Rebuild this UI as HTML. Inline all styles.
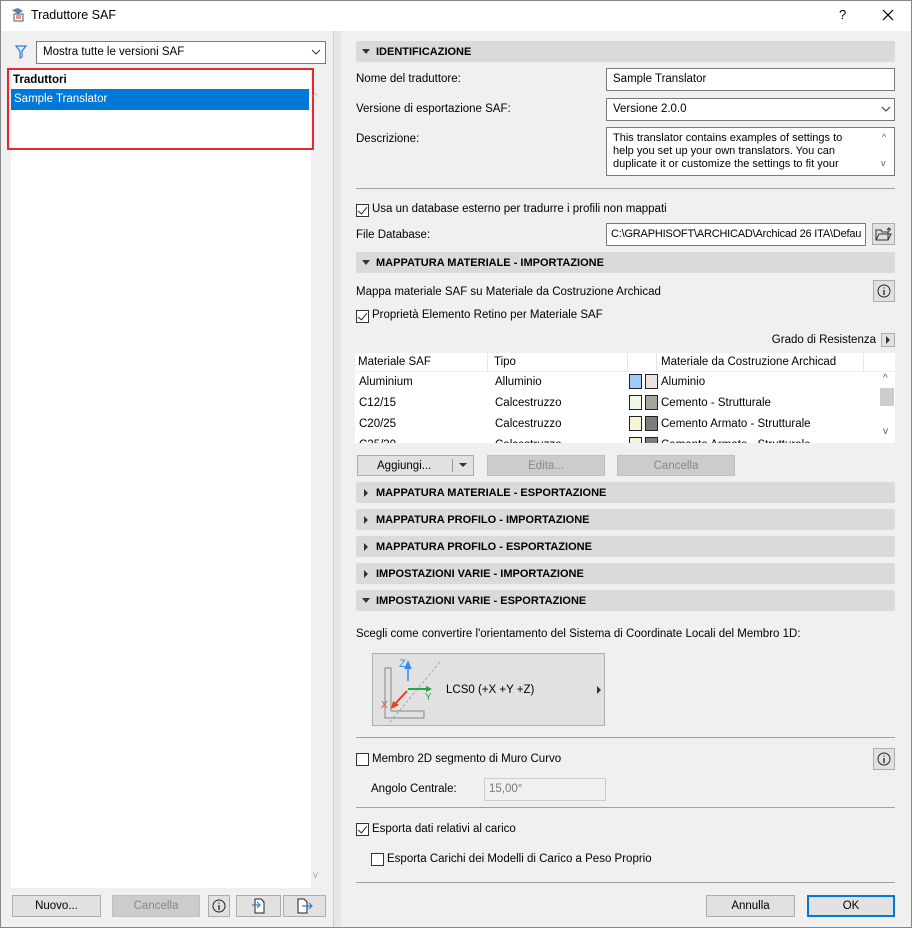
<!DOCTYPE html>
<html><head><meta charset="utf-8"><style>
*{box-sizing:border-box;margin:0;padding:0}
body{width:912px;height:928px;background:#f0f0f0;font-family:"Liberation Sans",sans-serif;font-size:11.5px;color:#000;position:relative;overflow:hidden}
.a{position:absolute}
.win{left:0;top:0;width:912px;height:928px;border:1px solid #888;}
.tb{left:1px;top:1px;width:910px;height:30px;background:#fff}
.hdr{position:absolute;left:356px;width:539px;height:21px;background:#dadada;border-radius:2px;font-weight:bold;font-size:11px;line-height:22px;padding-left:20px}
.hdr:before{content:"";position:absolute;left:8px;top:7px;border-left:4px solid #333;border-top:4px solid transparent;border-bottom:4px solid transparent}
.hdr.o:before{left:6px;top:8px;border-top:5px solid #333;border-left:4px solid transparent;border-right:4px solid transparent;border-bottom:0}
.inp{position:absolute;background:#fff;border:1px solid #7a7a7a;height:23px;line-height:21px;padding-left:6px}
.btn{position:absolute;background:#e1e1e1;border:1px solid #adadad;height:22px;line-height:20px;text-align:center}
.dis{background:#ccc;border-color:#bfbfbf;color:#888}
.cb{position:absolute;width:13px;height:13px;border:1px solid #333;background:#fff}
.sep{position:absolute;height:1px;background:#a0a0a0}
.t{position:absolute;white-space:nowrap}
.chk:after{content:"";position:absolute;left:3px;top:0px;width:4px;height:8px;border:solid #222;border-width:0 1.5px 1.5px 0;transform:rotate(40deg)}
.sw{position:absolute;width:13px;height:15px;border:1px solid #222}
</style></head><body>
<div class="a win"></div>
<div class="a tb"></div>
<svg class="a" style="left:9px;top:6px" width="18" height="18"><path d="M3 4 L9 2 L14 5 L9 8Z" fill="#5c7fb8"/><rect x="5" y="8" width="9" height="7" fill="#fff" stroke="#555"/><path d="M7 10h5M7 12h5" stroke="#c33"/></svg>
<div class="t" style="left:31px;top:8px;font-size:12.5px">Traduttore SAF</div>
<div class="t" style="left:839px;top:7px;font-size:13px">?</div>
<svg class="a" style="left:882px;top:9px" width="12" height="12"><path d="M1 1L11 11M11 1L1 11" stroke="#000" stroke-width="1.2"/></svg>

<!-- left -->
<svg class="a" style="left:15px;top:45px" width="12" height="14"><path d="M1 1H11L7 6V12L5 13V6Z" fill="none" stroke="#2a7fd4" stroke-width="1.2"/></svg>
<div class="inp" style="left:36px;top:41px;width:290px;height:23px">Mostra tutte le versioni SAF</div>
<svg class="a" style="left:311px;top:49px" width="10" height="6"><path d="M1 1L5 5L9 1" fill="none" stroke="#333"/></svg>
<div class="a" style="left:11px;top:70px;width:300px;height:818px;background:#fff"></div>
<div class="a" style="left:7px;top:68px;width:307px;height:82px;border:2px solid #e8262b"></div>
<div class="t" style="left:13px;top:74px;font-weight:bold">Traduttori</div>
<div class="a" style="left:11px;top:89px;width:298px;height:21px;background:#0078d7;color:#fff;line-height:21px;padding-left:3px">Sample Translator</div>
<div class="t" style="left:313px;top:92px;color:#bbb;font-size:10px">^</div>
<div class="t" style="left:313px;top:870px;color:#aaa;font-size:10px">v</div>
<div class="btn" style="left:12px;top:895px;width:89px">Nuovo...</div>
<div class="btn dis" style="left:112px;top:895px;width:88px">Cancella</div>
<div class="btn" style="left:208px;top:895px;width:22px"><svg width="14" height="14" style="margin-top:3px"><circle cx="7" cy="7" r="6" fill="none" stroke="#222"/><path d="M7 6v5M7 3.5v1" stroke="#222" stroke-width="1.3"/></svg></div>
<div class="btn" style="left:236px;top:895px;width:45px"><svg width="16" height="18" style="margin-top:1px"><path d="M4 2H10L13 5V16H4Z" fill="#fff" stroke="#222"/><path d="M1 8H9M6 5L9 8L6 11" fill="none" stroke="#2a7fd4" stroke-width="1.2"/></svg></div>
<div class="btn" style="left:283px;top:895px;width:43px"><svg width="18" height="18" style="margin-top:1px"><path d="M2 2H8L11 5V16H2Z" fill="#fff" stroke="#222"/><path d="M6 9H16M13 6L16 9L13 12" fill="none" stroke="#2a7fd4" stroke-width="1.2"/></svg></div>
<!-- splitter -->
<div class="a" style="left:333px;top:31px;width:8px;height:896px;background:#e6e6e6;border-left:1px solid #d0d0d0"></div>

<!-- right -->
<div class="hdr o" style="top:41px">IDENTIFICAZIONE</div>
<div class="t" style="left:356px;top:73px">Nome del traduttore:</div>
<div class="inp" style="left:606px;top:68px;width:289px">Sample Translator</div>
<div class="t" style="left:356px;top:103px">Versione di esportazione SAF:</div>
<div class="inp" style="left:606px;top:98px;width:289px">Versione 2.0.0</div>
<svg class="a" style="left:881px;top:106px" width="10" height="6"><path d="M1 1L5 5L9 1" fill="none" stroke="#333"/></svg>
<div class="t" style="left:356px;top:133px">Descrizione:</div>
<div class="inp" style="left:606px;top:127px;width:289px;height:49px;line-height:13px;padding-top:4px;font-size:11px">This translator contains examples of settings to<br>help you set up your own translators. You can<br>duplicate it or customize the settings to fit your</div>
<div class="t" style="left:882px;top:132px;font-size:9px;color:#555">^</div>
<div class="t" style="left:881px;top:158px;font-size:9px;color:#555">v</div>
<div class="sep" style="left:356px;top:188px;width:539px"></div>
<div class="cb chk" style="left:356px;top:204px"></div>
<div class="t" style="left:372px;top:203px">Usa un database esterno per tradurre i profili non mappati</div>
<div class="t" style="left:356px;top:229px">File Database:</div>
<div class="inp" style="left:606px;top:223px;width:260px;overflow:hidden;padding-left:4px;font-size:11px;letter-spacing:-0.2px">C:\GRAPHISOFT\ARCHICAD\Archicad 26 ITA\Defau</div>
<div class="btn" style="left:872px;top:223px;width:23px;height:22px"><svg width="18" height="14" style="margin-top:3px"><path d="M1 3H6L7 5H13V13H1Z M1 13L4 7H16L13 13" fill="none" stroke="#333"/><path d="M14 1V5M12 3L14 1L16 3" fill="none" stroke="#333"/></svg></div>
<div class="hdr o" style="top:252px">MAPPATURA MATERIALE - IMPORTAZIONE</div>
<div class="t" style="left:356px;top:286px">Mappa materiale SAF su Materiale da Costruzione Archicad</div>
<div class="btn" style="left:873px;top:280px;width:22px"><svg width="14" height="14" style="margin-top:3px"><circle cx="7" cy="7" r="6" fill="none" stroke="#222"/><path d="M7 6v5M7 3.5v1" stroke="#222" stroke-width="1.3"/></svg></div>
<div class="cb chk" style="left:356px;top:310px"></div>
<div class="t" style="left:372px;top:309px">Proprietà Elemento Retino per Materiale SAF</div>
<div class="t" style="right:36px;top:334px">Grado di Resistenza</div>
<div class="btn" style="left:881px;top:333px;width:14px;height:14px"><div style="margin:2px 0 0 4px;border-left:4px solid #333;border-top:4px solid transparent;border-bottom:4px solid transparent;width:0"></div></div>
<div class="a" style="left:355px;top:353px;width:540px;height:90px;background:#fff;overflow:hidden">
 <div class="a" style="left:0;top:0;width:540px;height:19px;border-bottom:1px solid #f0f0f0"></div>
 <div class="a" style="left:132px;top:0;width:1px;height:19px;background:#e5e5e5"></div>
 <div class="a" style="left:272px;top:0;width:1px;height:19px;background:#e5e5e5"></div>
 <div class="a" style="left:301px;top:0;width:1px;height:19px;background:#e5e5e5"></div>
 <div class="a" style="left:508px;top:0;width:1px;height:19px;background:#e5e5e5"></div>
 <div class="t" style="left:3px;top:3px">Materiale SAF</div><div class="t" style="left:139px;top:3px">Tipo</div><div class="t" style="left:306px;top:3px">Materiale da Costruzione Archicad</div>
 <div class="t" style="left:4px;top:23px">Aluminium</div><div class="t" style="left:140px;top:23px">Alluminio</div><div class="t" style="left:306px;top:23px">Aluminio</div>
 <div class="t" style="left:4px;top:44px">C12/15</div><div class="t" style="left:140px;top:44px">Calcestruzzo</div><div class="t" style="left:306px;top:44px">Cemento - Strutturale</div>
 <div class="t" style="left:4px;top:65px">C20/25</div><div class="t" style="left:140px;top:65px">Calcestruzzo</div><div class="t" style="left:306px;top:65px">Cemento Armato - Strutturale</div>
 <div class="t" style="left:4px;top:86px">C25/30</div><div class="t" style="left:140px;top:86px">Calcestruzzo</div><div class="t" style="left:306px;top:86px">Cemento Armato - Strutturale</div>
 <div class="sw" style="left:274px;top:21px;background:#9fcbff"></div><div class="sw" style="left:290px;top:21px;background:#ebe2e1"></div>
 <div class="sw" style="left:274px;top:42px;background:#eef8e8"></div><div class="sw" style="left:290px;top:42px;background:#a6a69e"></div>
 <div class="sw" style="left:274px;top:63px;background:#f5f3d8"></div><div class="sw" style="left:290px;top:63px;background:#7c7c7c"></div>
 <div class="sw" style="left:274px;top:84px;background:#f5f3d8"></div><div class="sw" style="left:290px;top:84px;background:#7c7c7c"></div>
 <div class="a" style="left:525px;top:35px;width:14px;height:18px;background:#cdcdcd"></div>
 <div class="t" style="left:528px;top:20px;font-size:10px;color:#555">^</div>
 <div class="t" style="left:528px;top:73px;font-size:10px;color:#555">v</div>
</div>
<div class="btn" style="left:357px;top:455px;width:117px;height:21px;text-align:left;padding-left:19px">Aggiungi...</div>
<div class="a" style="left:452px;top:459px;width:1px;height:13px;background:#999"></div>
<div class="a" style="left:459px;top:463px;border-top:4px solid #333;border-left:4px solid transparent;border-right:4px solid transparent"></div>
<div class="btn dis" style="left:487px;top:455px;width:118px;height:21px">Edita...</div>
<div class="btn dis" style="left:617px;top:455px;width:118px;height:21px">Cancella</div>
<div class="hdr" style="top:482px">MAPPATURA MATERIALE - ESPORTAZIONE</div>
<div class="hdr" style="top:509px">MAPPATURA PROFILO - IMPORTAZIONE</div>
<div class="hdr" style="top:536px">MAPPATURA PROFILO - ESPORTAZIONE</div>
<div class="hdr" style="top:563px">IMPOSTAZIONI VARIE - IMPORTAZIONE</div>
<div class="hdr o" style="top:590px">IMPOSTAZIONI VARIE - ESPORTAZIONE</div>
<div class="t" style="left:356px;top:628px">Scegli come convertire l'orientamento del Sistema di Coordinate Locali del Membro 1D:</div>
<div class="a" style="left:372px;top:653px;width:233px;height:73px;background:#e1e1e1;border:1px solid #adadad"></div>
<svg class="a" style="left:372px;top:653px" width="100" height="73"><path d="M18 69L68 9" stroke="#aaa" stroke-dasharray="3 2"/><path d="M13 15V65H52V58H19V15Z" fill="none" stroke="#888"/><path d="M36 28V11M33 16L36 9L39 16" fill="#3a87f0" stroke="#3a87f0" stroke-width="1.5"/><text x="27" y="14" font-size="11" fill="#3a87f0" font-family="Liberation Sans">Z</text><path d="M36 36H56" stroke="#2aa04a" stroke-width="2"/><path d="M54 33L60 36L54 39Z" fill="#2aa04a"/><text x="53" y="47" font-size="10" fill="#2aa04a" font-family="Liberation Sans">Y</text><path d="M35 38L22 52" stroke="#e84020" stroke-width="2"/><path d="M19 56L21 48L27 52Z" fill="#e84020"/><text x="9" y="55" font-size="10" fill="#e84020" font-family="Liberation Sans">X</text></svg>
<div class="t" style="left:446px;top:684px">LCS0 (+X +Y +Z)</div>
<div class="a" style="left:597px;top:686px;border-left:4px solid #333;border-top:4px solid transparent;border-bottom:4px solid transparent"></div>
<div class="sep" style="left:356px;top:737px;width:539px"></div>
<div class="cb" style="left:356px;top:753px"></div>
<div class="t" style="left:372px;top:753px">Membro 2D segmento di Muro Curvo</div>
<div class="btn" style="left:873px;top:748px;width:22px"><svg width="14" height="14" style="margin-top:3px"><circle cx="7" cy="7" r="6" fill="none" stroke="#222"/><path d="M7 6v5M7 3.5v1" stroke="#222" stroke-width="1.3"/></svg></div>
<div class="t" style="left:371px;top:783px">Angolo Centrale:</div>
<div class="inp" style="left:484px;top:778px;width:122px;background:#f0f0f0;border-color:#ccc;color:#777;padding-left:4px">15,00°</div>
<div class="sep" style="left:356px;top:807px;width:539px"></div>
<div class="cb chk" style="left:356px;top:823px"></div>
<div class="t" style="left:372px;top:823px">Esporta dati relativi al carico</div>
<div class="cb" style="left:371px;top:853px"></div>
<div class="t" style="left:387px;top:853px">Esporta Carichi dei Modelli di Carico a Peso Proprio</div>
<div class="sep" style="left:356px;top:882px;width:539px"></div>
<div class="btn" style="left:706px;top:895px;width:89px">Annulla</div>
<div class="btn" style="left:807px;top:895px;width:88px;border:2px solid #0078d7;line-height:18px">OK</div>
</body></html>
